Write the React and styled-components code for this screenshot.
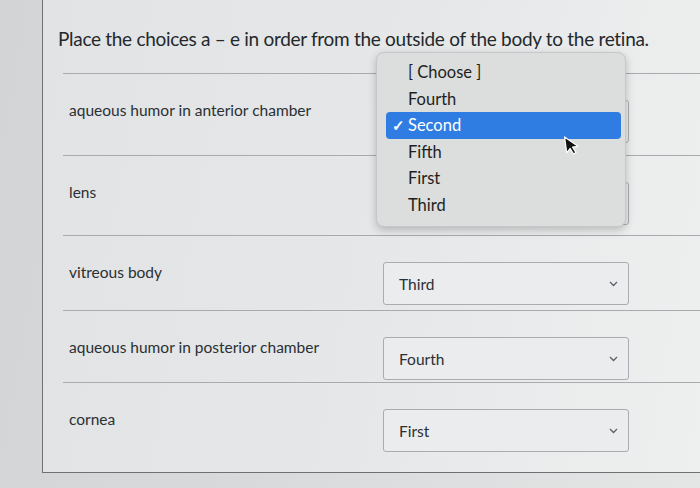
import styled, { createGlobalStyle } from "styled-components";

const GlobalStyle = createGlobalStyle`
  html, body {
    margin: 0;
    padding: 0;
    background: #d6d7d8;
    font-family: Lato, "Noto Sans", sans-serif;
  }
`;

// the first two selects sit under the open menu, so their value is hidden
const rows = [
  { label: "aqueous humor in anterior chamber", value: "", height: 82 },
  { label: "lens", value: "", height: 80 },
  { label: "vitreous body", value: "Third", height: 75 },
  { label: "aqueous humor in posterior chamber", value: "Fourth", height: 72 },
  { label: "cornea", value: "First", height: 89 },
];

const options = ["[ Choose ]", "Fourth", "Second", "Fifth", "First", "Third"];

const Chevron = () => (
  <svg width="9" height="6" viewBox="0 0 9 6" fill="none">
    <path d="M1 1l3.5 3.5L8 1" stroke="#5b6166" strokeWidth="1.3" />
  </svg>
);

const Pointer = () => (
  <svg width="14" height="21" viewBox="0 0 14 21">
    <path
      d="M1 1v16l4-3.8 2.6 6 2.6-1.1-2.6-5.9H13z"
      fill="#111"
      stroke="#fff"
      strokeWidth="1.2"
      strokeLinejoin="round"
    />
  </svg>
);

const App = () => {
  return (
    <Page>
      <GlobalStyle />
      <Panel>
        <Question>
          Place the choices a – e in order from the outside of the body to the
          retina.
        </Question>
        <Rows>
          {rows.map((r, i) => (
            <Row key={i} $h={r.height}>
              <Label>{r.label}</Label>
              <Select>
                <span>{r.value}</span>
                <Chevron />
              </Select>
            </Row>
          ))}
        </Rows>
        <Menu>
          {options.map((o) => (
            <Item key={o} $active={o === "Second"}>
              {o === "Second" && <Check>✓</Check>}
              {o}
            </Item>
          ))}
          <Cursor>
            <Pointer />
          </Cursor>
        </Menu>
      </Panel>
    </Page>
  );
};

export default App;

const Page = styled.div`
  width: 700px;
  height: 488px;
  overflow: hidden;
  background: linear-gradient(100deg, #d3d4d5 0%, #d8d9da 40%, #e4e6e6 100%);
`;

const Panel = styled.div`
  position: relative;
  box-sizing: border-box;
  margin-left: 42px;
  height: 473px;
  border-left: 1px solid #6d7174;
  border-bottom: 1px solid #6d7174;
  background: linear-gradient(100deg, #e2e3e4 0%, #e6e7e8 50%, #eef0f0 100%);
  color: #2d3b45;
`;

const Question = styled.div`
  padding: 27px 0 0 15px;
  font-size: 19px;
  letter-spacing: -0.3px;
  line-height: 24px;
  color: #23282c;
  white-space: nowrap;
`;

const Rows = styled.div`
  margin: 22px 0 0 20px;
`;

const Row = styled.div`
  display: grid;
  grid-template-columns: 320px 246px;
  align-items: start;
  height: ${(p) => p.$h}px;
  border-top: 1px solid #a8abad;
  box-sizing: border-box;
`;

const Label = styled.div`
  padding: 26px 0 0 6px;
  font-size: 15.5px;
  line-height: 20px;
  color: #2a3034;
`;

const Select = styled.div`
  margin-top: 26px;
  height: 43px;
  box-sizing: border-box;
  display: flex;
  align-items: center;
  justify-content: space-between;
  padding: 0 10px 0 15px;
  border: 1px solid #a9adb0;
  border-radius: 3px;
  background: #ebeced;
  font-size: 15.5px;
  color: #2a3034;
`;

const Menu = styled.div`
  position: absolute;
  left: 333px;
  top: 52px;
  width: 250px;
  box-sizing: border-box;
  padding: 6px 4px 8px 9px;
  background: #dcdddd;
  border: 1px solid #c6c7c8;
  border-radius: 8px;
  box-shadow: 0 3px 8px rgba(0, 0, 0, 0.22);
`;

const Item = styled.div`
  position: relative;
  height: 26.5px;
  line-height: 26.5px;
  padding-left: 22px;
  border-radius: 4px;
  font-size: 16.5px;
  color: ${(p) => (p.$active ? "#ffffff" : "#1e1f20")};
  background: ${(p) => (p.$active ? "#2f7de3" : "transparent")};
`;

const Check = styled.span`
  position: absolute;
  left: 6px;
  font-size: 15px;
  font-weight: 700;
`;

const Cursor = styled.div`
  position: absolute;
  left: 188px;
  top: 82px;
  transform: rotate(-8deg);
`;
